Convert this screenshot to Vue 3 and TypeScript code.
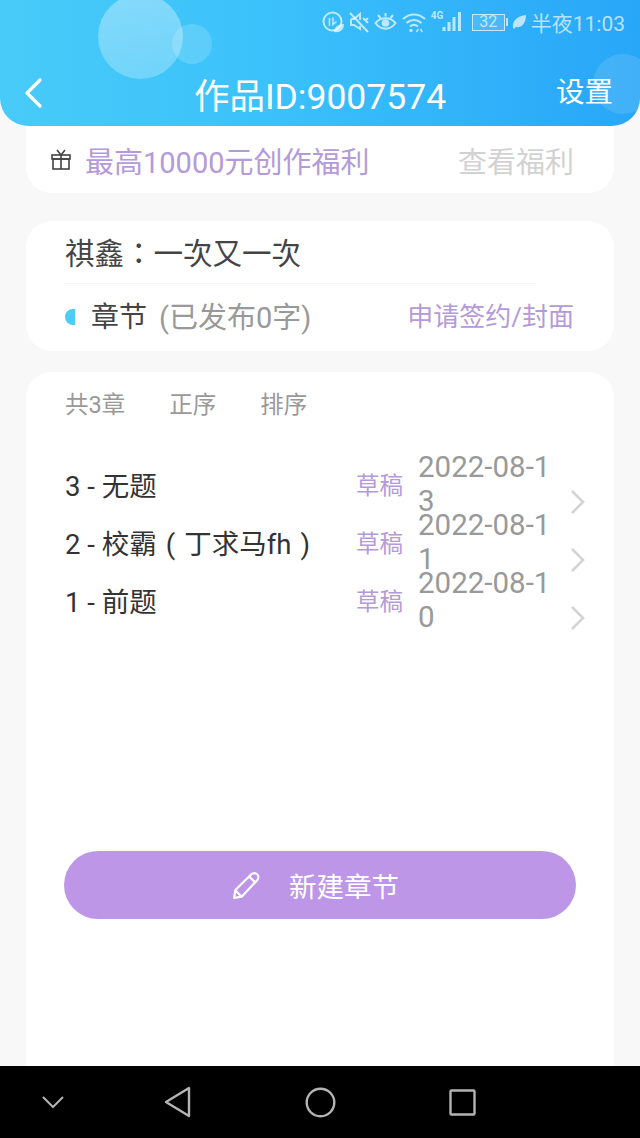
<script setup lang="ts">
interface Chapter {
  title: string
  status: string
  date: string
}

const chapters: Chapter[] = [
  { title: '3 - 无题', status: '草稿', date: '2022-08-13' },
  { title: '2 - 校霸(丁求马fh)', status: '草稿', date: '2022-08-11' },
  { title: '1 - 前题', status: '草稿', date: '2022-08-10' }
]

// 括号在原图里占满一个汉字宽并居中，单独拆出来
function titleParts(title: string): string[] {
  return title.split(/([()])/).filter(Boolean)
}
</script>

<template>
  <div class="page">
    <header class="header">
      <span class="bubble bubble-big"></span>
      <span class="bubble bubble-small"></span>
      <span class="bubble bubble-right"></span>
      <div class="status-bar">
        <svg width="22" height="22" viewBox="0 0 22 22" fill="none" stroke="currentColor" stroke-width="2">
          <circle cx="10.500" cy="10.500" r="9" />
          <path d="M7.500 7v8M11 6.500v7l3.500-3" stroke-width="1.600" />
          <path d="M12 21c0-5 4-8 10-8 0 6-4 9-10 8z" fill="currentColor" stroke="none" />
        </svg>
        <svg width="20" height="22" viewBox="0 0 20 22" fill="none" stroke="currentColor" stroke-width="2">
          <path d="M2 8h3l6-5v6M11 15v3l-6-4H2V8" />
          <path d="M1 2l18 19M14 7l5 5M19 7l-3 3" />
        </svg>
        <svg width="23" height="22" viewBox="0 0 23 22" fill="none" stroke="currentColor" stroke-width="2">
          <path d="M1.500 12c5-6.500 15-6.500 20 0-5 7.500-15 7.500-20 0z" />
          <circle cx="11.500" cy="12" r="3.800" fill="currentColor" stroke="none" />
          <path d="M4 4l2.500 3M11.500 2v3.500M19 4l-2.500 3" />
        </svg>
        <svg width="24" height="22" viewBox="0 0 24 22" fill="none" stroke="currentColor" stroke-width="2">
          <path d="M1 8c6.500-6 15.500-6 22 0M4.500 12c4.500-4 10.500-4 15 0M8 15.500c2.500-2 5.500-2 8 0" />
          <circle cx="9" cy="19.500" r="1.700" fill="currentColor" stroke="none" />
          <path d="M14.500 21l1.800-3M18.500 18l1.800 3" stroke-width="1.500" />
        </svg>
        <span class="net">
          <span class="net-label">4G</span>
          <svg width="31" height="20" viewBox="0 0 31 20" fill="currentColor">
            <rect x="11.500" y="15" width="3" height="4" />
            <rect x="16.500" y="10" width="3" height="9" />
            <rect x="21.500" y="5" width="3" height="14" />
            <rect x="27" y="0" width="3" height="19" />
          </svg>
        </span>
        <span class="battery"><span class="battery-num">32</span></span>
        <span class="battery-tip"></span>
        <svg width="14" height="16" viewBox="0 0 14 16" fill="currentColor">
          <path d="M1 14C0 7 5 2 14 1c0 8-4 13-10 12l-2 2z" />
        </svg>
        <span class="clock">半夜11:03</span>
      </div>
      <div class="nav-bar">
        <svg class="back" width="20" height="32" viewBox="0 0 20 32" fill="none" stroke="#fff" stroke-width="3.200" stroke-linecap="round" stroke-linejoin="round">
          <path d="M16 3L3 16l13 13" />
        </svg>
        <span class="nav-title">作品ID:9007574</span>
        <span class="nav-action">设置</span>
      </div>
    </header>

    <section class="card welfare">
      <svg class="gift" width="22" height="22" viewBox="0 0 22 22" fill="none" stroke="#444" stroke-width="1.600">
        <rect x="2" y="6" width="18" height="4" />
        <rect x="3" y="10" width="16" height="10" />
        <path d="M11 6v14M7 1l4 5 4-5" />
      </svg>
      <span class="welfare-text">最高10000元创作福利</span>
      <span class="welfare-link">查看福利</span>
    </section>

    <section class="card work">
      <div class="work-title">祺鑫：一次又一次</div>
      <div class="work-row">
        <span class="dot"></span>
        <span class="work-label">章节</span>
        <span class="work-count">(已发布0字)</span>
        <span class="work-link">申请签约/封面</span>
      </div>
    </section>

    <section class="card chapters">
      <div class="toolbar">
        <span>共3章</span>
        <span>正序</span>
        <span>排序</span>
      </div>
      <ul class="chapter-list">
        <li v-for="c in chapters" :key="c.date" class="chapter">
          <span class="chapter-title">
            <template v-for="(part, i) in titleParts(c.title)" :key="i">
              <span v-if="part === '(' || part === ')'" class="paren">{{ part }}</span>
              <template v-else>{{ part }}</template>
            </template>
          </span>
          <span class="chapter-status">{{ c.status }}</span>
          <span class="chapter-date">{{ c.date }}</span>
          <svg class="chevron" width="16" height="26" viewBox="0 0 16 26" fill="none" stroke="#d4d4d4" stroke-width="2.600">
            <path d="M2 2l11 11L2 24" />
          </svg>
        </li>
      </ul>
      <button class="create" type="button">
        <svg width="30" height="30" viewBox="0 0 28 28" fill="none" stroke="#fff" stroke-width="2" stroke-linejoin="round">
          <path d="M2 26l1-7L18 4c1.500-1.500 4-1.500 5.500 0s1.500 4 0 5.500L9 25z" />
          <path d="M3 19l6 6M16 6l6 6" />
        </svg>
        <span>新建章节</span>
      </button>
    </section>

    <footer class="sys-nav">
      <svg width="24" height="16" viewBox="0 0 24 16" fill="none" stroke="#b4b4b4" stroke-width="2">
        <path d="M2 3l10 10L22 3" />
      </svg>
      <svg class="nav-back" width="27" height="32" viewBox="0 0 27 32" fill="none" stroke="#b4b4b4" stroke-width="2.400" stroke-linejoin="round">
        <path d="M25 2v28L2 16z" />
      </svg>
      <svg class="nav-home" width="31" height="31" viewBox="0 0 31 31" fill="none" stroke="#b4b4b4" stroke-width="2.400">
        <circle cx="15.500" cy="15.500" r="13.800" />
      </svg>
      <svg class="nav-recent" width="27" height="27" viewBox="0 0 27 27" fill="none" stroke="#b4b4b4" stroke-width="2.400" stroke-linejoin="round">
        <rect x="1.500" y="1.500" width="24" height="24" rx="1" />
      </svg>
    </footer>
  </div>
</template>

<style>
body {
  margin: 0;
  background: #f8f8f8;
}
</style>

<style scoped>
.page {
  display: flex;
  flex-direction: column;
  width: 640px;
  height: 1138px;
  overflow: hidden;
  background: #f8f8f8;
  font-family: Roboto, "Noto Sans CJK SC", sans-serif;
}

.header {
  position: relative;
  flex-shrink: 0;
  box-sizing: border-box;
  height: 126px;
  overflow: hidden;
  border-radius: 0 0 28px 28px;
  background: linear-gradient(90deg, #48cbf8 0%, #3cc2fb 40%, #28a6f8 100%);
}

.bubble {
  position: absolute;
  border-radius: 50%;
}

.bubble-big {
  left: 98px;
  top: -6px;
  width: 85px;
  height: 85px;
  background: linear-gradient(180deg, rgba(255, 255, 255, 0.35), rgba(255, 255, 255, 0.25));
}

.bubble-small {
  left: 172px;
  top: 24px;
  width: 40px;
  height: 40px;
  background: rgba(255, 255, 255, 0.16);
}

.bubble-right {
  left: 593px;
  top: 54px;
  width: 60px;
  height: 60px;
  background: rgba(255, 255, 255, 0.12);
}

.status-bar {
  display: flex;
  align-items: center;
  justify-content: flex-end;
  gap: 5px;
  height: 44px;
  padding-right: 15px;
  color: rgba(255, 255, 255, 0.68);
}

.net {
  position: relative;
  display: flex;
}

.net-label {
  position: absolute;
  left: 0;
  top: -2px;
  font-size: 10px;
  font-weight: 700;
}

.battery {
  display: flex;
  align-items: center;
  justify-content: center;
  box-sizing: border-box;
  width: 33px;
  height: 17px;
  margin-left: 5px;
  border: 1px solid currentColor;
  background: rgba(255, 255, 255, 0.12);
}

.battery-num {
  font-size: 16px;
  line-height: 1;
}

.battery-tip {
  width: 2px;
  height: 8px;
  margin-left: -4px;
  margin-right: -1px;
  background: currentColor;
}

.clock {
  font-size: 21px;
}

.nav-bar {
  display: flex;
  align-items: center;
  justify-content: center;
  position: relative;
  height: 50px;
  margin-top: 24px;
}

.back {
  position: absolute;
  left: 24px;
  top: 9px;
}

.nav-title {
  color: #fff;
  font-size: 35.500px;
}

.nav-action {
  position: absolute;
  right: 27px;
  top: 0;
  color: #fff;
  font-size: 28.500px;
  line-height: 50px;
}

.card {
  margin: 0 26px;
  background: #fff;
  border-radius: 26px;
}

.welfare {
  display: flex;
  align-items: center;
  flex-shrink: 0;
  height: 67px;
  padding: 0 40px 0 24px;
  border-radius: 0 0 26px 26px;
}

.gift {
  margin-right: 13px;
}

.welfare-text {
  flex: 1;
  color: #b49ad9;
  font-size: 29px;
}

.welfare-link {
  color: #d2d2d2;
  font-size: 29px;
}

.work {
  flex-shrink: 0;
  height: 130px;
  margin-top: 28px;
  padding: 0 39px;
}

.work-title {
  height: 58px;
  padding-top: 4px;
  margin-right: 39px;
  border-bottom: 1px solid #f5f5f5;
  color: #444;
  font-family: Roboto, "Noto Sans CJK TC", sans-serif;
  font-size: 29.500px;
  line-height: 58px;
}

.work-row {
  display: flex;
  align-items: center;
  height: 62px;
}

.dot {
  width: 10px;
  height: 16px;
  margin: 4px 17px 0 0;
  border-radius: 10px 0 0 10px;
  background: #4ccdf5;
}

.work-label {
  margin-left: -1px;
  color: #444;
  font-size: 28px;
}

.work-count {
  flex: 1;
  margin-left: 12px;
  color: #999;
  font-size: 29px;
}

.work-link {
  margin: -2px 1px 0 0;
  color: #b49ad9;
  font-size: 26px;
}

.chapters {
  flex: 1;
  margin-top: 21px;
  padding: 0 38px;
  border-radius: 26px 26px 0 0;
}

.toolbar {
  display: flex;
  gap: 44px;
  height: 66px;
  padding-left: 1px;
  color: #999;
  font-size: 23.500px;
  line-height: 66px;
}

.chapter-list {
  margin: 0;
  padding: 17px 0 0;
  list-style: none;
}

.chapter {
  display: flex;
  align-items: center;
  height: 58px;
}

.chapter-title {
  flex: 1;
  padding-left: 1px;
  color: #333;
  font-size: 27.500px;
}

.paren {
  display: inline-block;
  width: 1em;
  text-align: center;
}

.chapter-status {
  width: 62px;
  color: #b49ad9;
  font-size: 23.500px;
}

.chapter-date {
  width: 135px;
  color: #999;
  font-size: 29.500px;
  line-height: 34px;
  word-break: break-all;
}

.chevron {
  margin: 36px -10px 0 17px;
  flex-shrink: 0;
}

.create {
  display: flex;
  align-items: center;
  justify-content: center;
  gap: 27px;
  width: 512px;
  height: 68px;
  margin: 222px 0 0;
  padding: 0 9px 0 0;
  border: 0;
  border-radius: 34px;
  background: #bd96e8;
  color: #fff;
  font-family: inherit;
  font-size: 27.500px;
}

.sys-nav {
  display: flex;
  align-items: center;
  flex-shrink: 0;
  box-sizing: border-box;
  height: 72px;
  padding-left: 41px;
  background: #000;
}

.nav-back {
  margin-left: 99px;
}

.nav-home {
  margin-left: 114px;
}

.nav-recent {
  margin-left: 113px;
}
</style>
